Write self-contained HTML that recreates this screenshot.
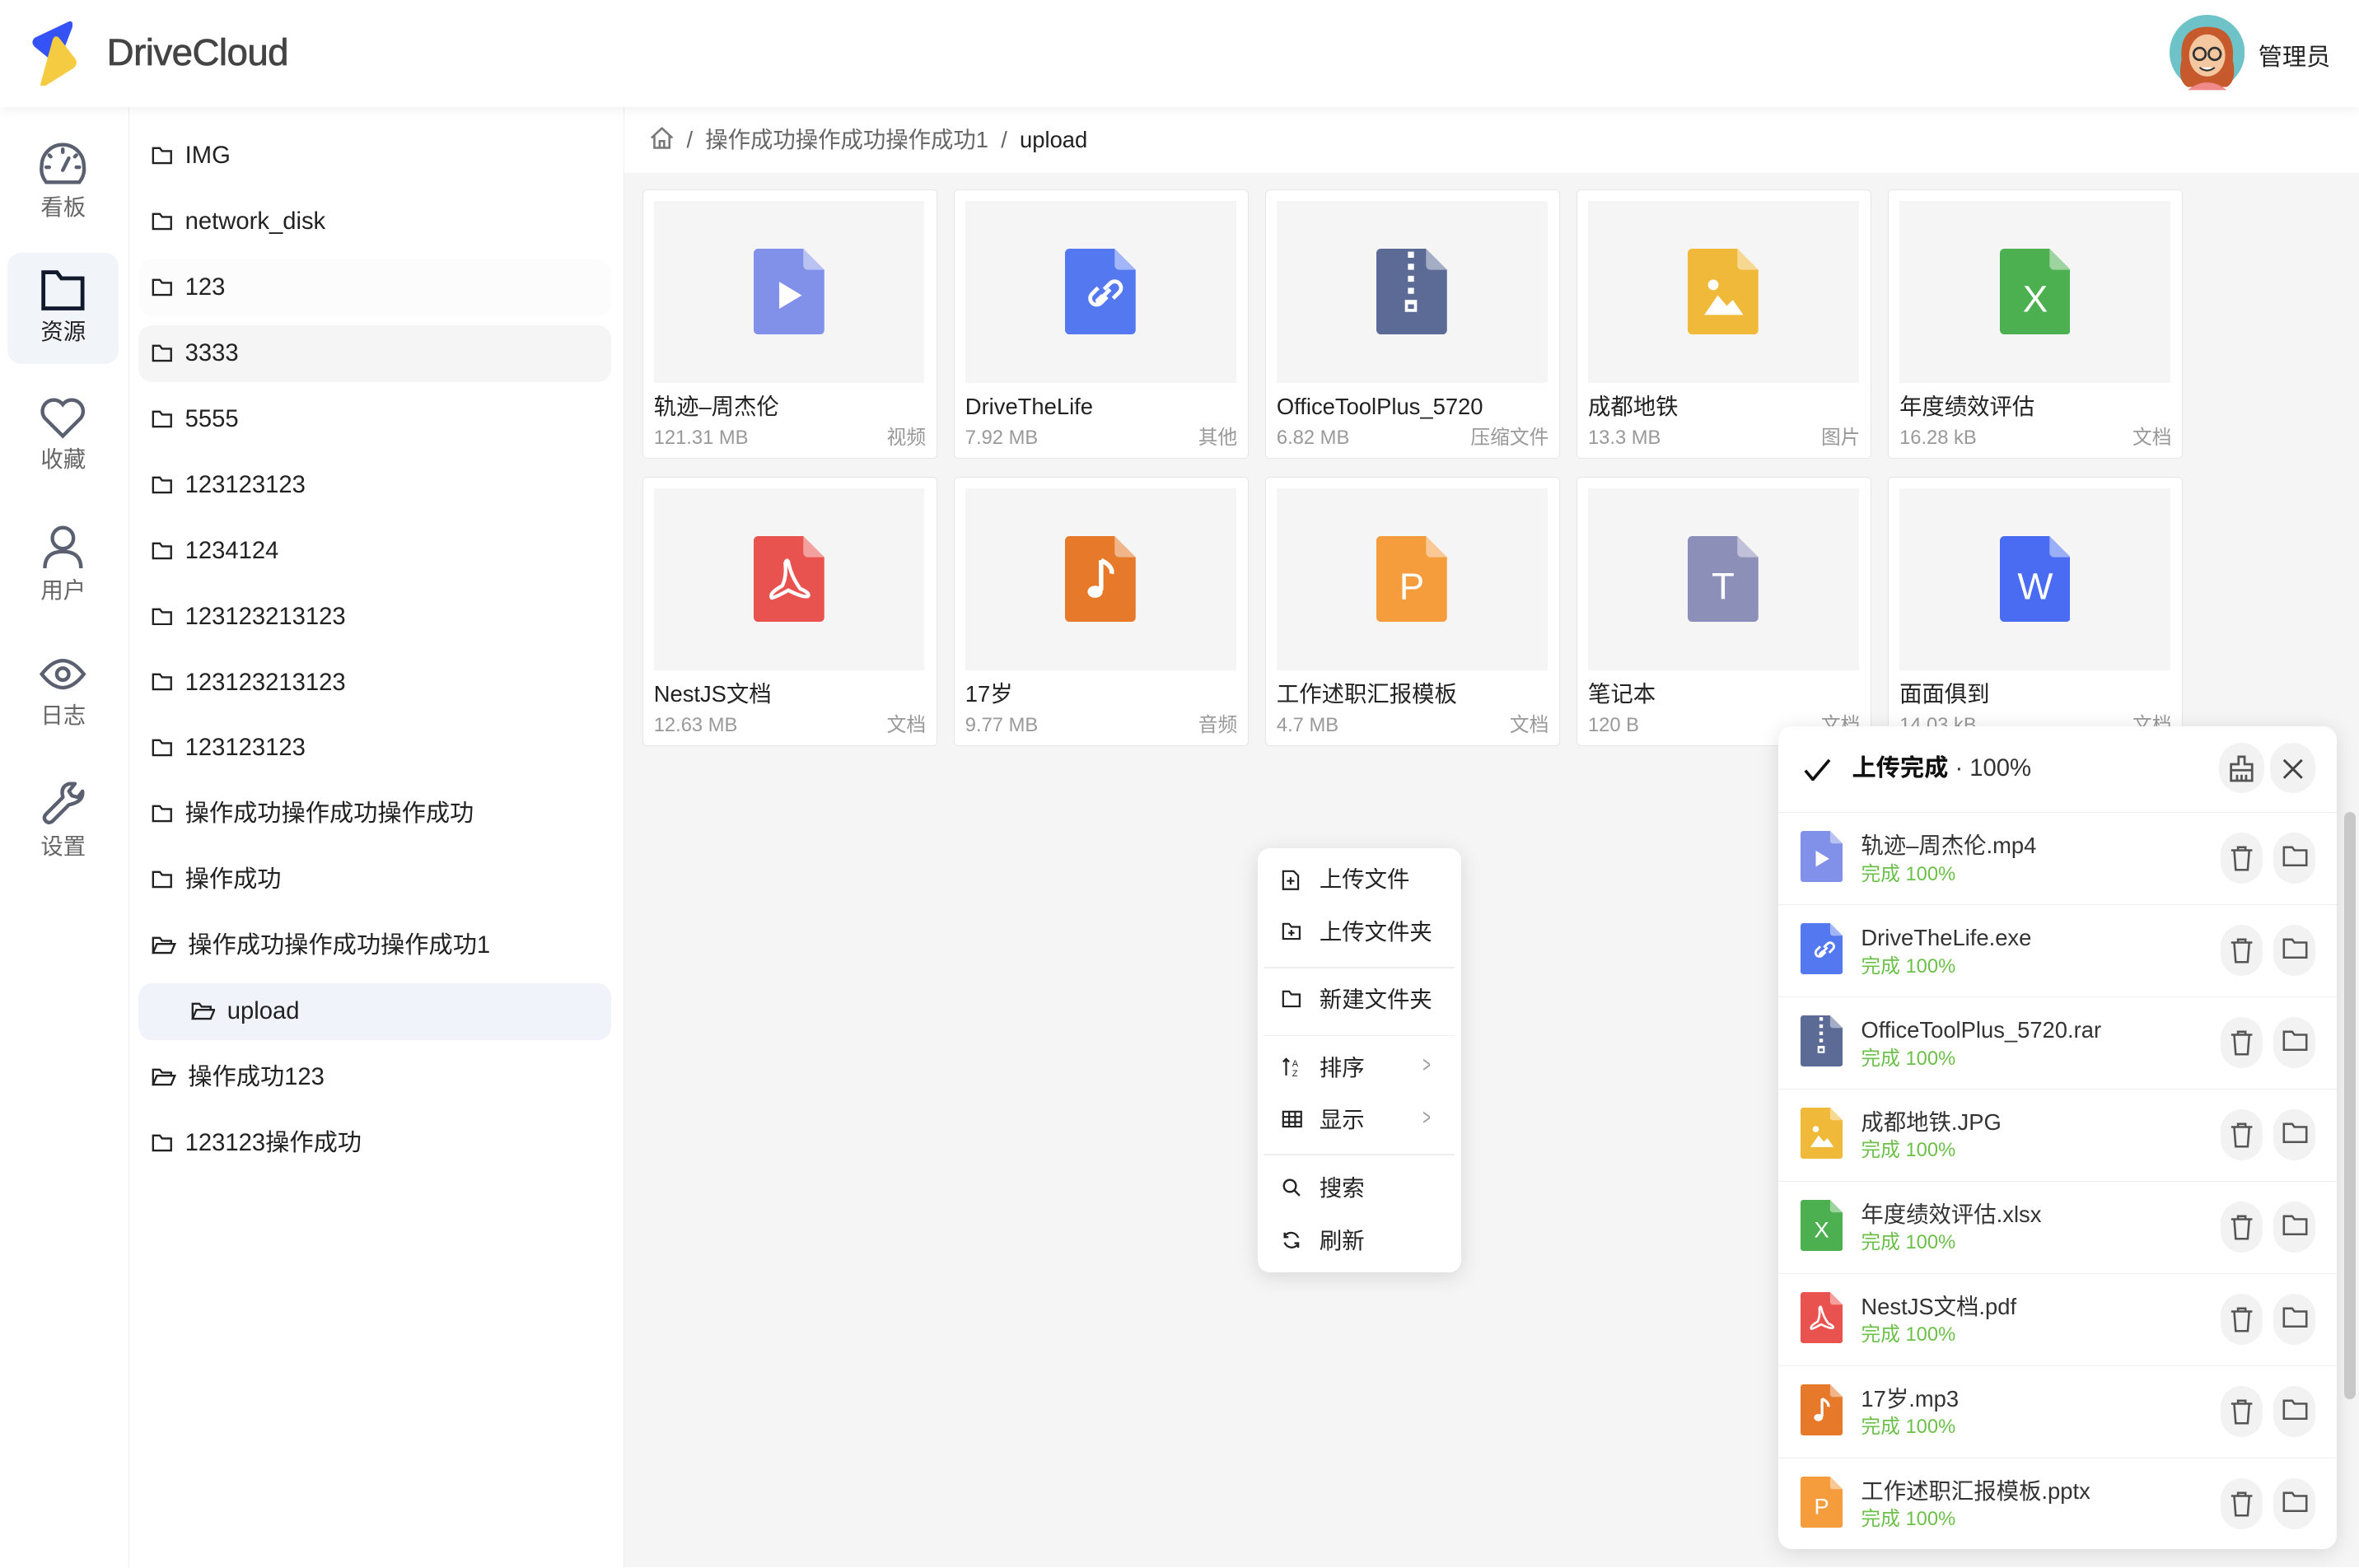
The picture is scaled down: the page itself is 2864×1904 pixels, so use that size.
<!DOCTYPE html>
<html><head><meta charset="utf-8">
<style>
*{box-sizing:border-box;margin:0;padding:0}
html,body{width:2864px;height:1904px;overflow:hidden;background:#fff}
body{font-family:"Liberation Sans","Noto Sans CJK SC",sans-serif;color:#222}
#root{zoom:1.82653;width:1568px;height:1042px;position:relative;overflow:hidden;background:#fff}
.a{position:absolute}
.hdr{left:0;top:0;width:1568px;height:71px;background:#fff;box-shadow:0 2px 8px rgba(0,0,0,.06);z-index:5}
.nav{left:0;top:71px;width:86px;height:971px;background:#fff;border-right:1px solid #eee}
.navi{position:absolute;left:5px;width:74px;height:74px;border-radius:9px;text-align:center;font-size:15px;line-height:18px;color:#666}
.navi svg{display:block;margin:11px auto 5px}
.tree{left:86px;top:71px;width:329px;height:971px;background:#fff;border-right:1px solid #eee}
.ti{position:absolute;left:6px;width:314px;height:38px;border-radius:9px;font-size:16px;line-height:38px;padding-left:9px;color:#222}
.ti svg{vertical-align:-1px;margin-right:8px}
.main{left:415px;top:115px;width:1153px;height:927px;background:#f5f5f5}
.crumb{left:415px;top:71px;width:1153px;height:44px;background:#fff;font-size:15px;line-height:44px;padding-left:17px;color:#666}
.card{position:absolute;width:196px;height:179px;background:#fff;border:1px solid #e6e6e6;border-radius:3px}
.card .pv{position:absolute;left:7px;top:7px;width:180px;height:121px;background:#f5f5f5;display:flex;align-items:center;justify-content:center}
.card .nm{position:absolute;left:7px;top:135px;font-size:15px;line-height:18px;height:18px;color:#222}
.card .sz{position:absolute;left:7px;top:157px;font-size:13px;line-height:16px;height:16px;color:#999}
.card .tp{position:absolute;right:7px;top:157px;font-size:13px;line-height:16px;height:16px;color:#999}
.menu{left:836px;top:564px;width:135px;height:282px;background:#fff;border-radius:8px;box-shadow:0 3px 14px rgba(0,0,0,.12);z-index:6}
.mi{position:absolute;left:16px;font-size:15px;color:#222;height:20px;line-height:20px}
.mi svg{position:absolute;left:0;top:3px}
.mi span{position:absolute;left:25px;white-space:nowrap}
.sep{position:absolute;left:4px;width:127px;height:1px;background:#eee}
.chev{position:absolute;left:108px;font-size:15px;color:#999;transform:scaleX(.6)}
.pan{left:1182px;top:483px;width:371px;height:547px;background:#fff;border-radius:9px;box-shadow:0 2px 14px rgba(0,0,0,.12);z-index:7;overflow:hidden}
.row{position:absolute;left:0;width:371px;height:61px;border-top:1px solid #eee}
.row .fn{position:absolute;left:55px;top:13px;font-size:15px;line-height:18px;color:#333;white-space:nowrap}
.row .st{position:absolute;left:55px;top:33px;font-size:13px;line-height:16px;color:#6cc04a}
.cb{position:absolute;width:28px;height:34px;border-radius:14px;background:#f2f2f2}
.cb svg{position:absolute;left:6px;top:9px}
</style></head><body><div id="root">
<svg width="0" height="0" style="position:absolute">
<defs>
<symbol id="doc" viewBox="0 0 47 57"><path d="M3 0H33L47 14V54a3 3 0 0 1-3 3H3a3 3 0 0 1-3-3V3a3 3 0 0 1 3-3Z"/><path d="M33 0L47 14H36a3 3 0 0 1-3-3Z" fill="#fff" opacity=".45"/></symbol>
</defs></svg>

<div class="a hdr">
<svg class="a" style="left:18px;top:13px" width="38" height="44" viewBox="0 0 38 44"><path d="M26 2 Q31 -1 30 5 L22 26 Q20 30 16 27 L5 18 Q2 15 5 12Z" fill="#3452f5"/><path d="M17 13 Q19 9 22 13 L32 26 Q34 29 31 32 L12 44 Q8 47 9 42Z" fill="#f5cb42"/></svg>
<div class="a" style="left:71px;top:21px;font-size:25px;color:#444;letter-spacing:-.3px;-webkit-text-stroke:.4px #444">DriveCloud</div>
<svg class="a" style="left:1442px;top:10px" width="50" height="50" viewBox="0 0 50 50"><circle cx="25" cy="25" r="25" fill="#6ec3c8"/><path d="M8 30 Q6 8 25 8 Q44 8 42 30 Q45 44 38 48 L12 48 Q5 44 8 30Z" fill="#c75a2c"/><ellipse cx="25" cy="27" rx="12" ry="14" fill="#f4c7a1"/><circle cx="20" cy="26" r="4" fill="none" stroke="#333" stroke-width="1.5"/><circle cx="30" cy="26" r="4" fill="none" stroke="#333" stroke-width="1.5"/><path d="M20 35 Q25 39 30 35" stroke="#333" fill="#fff" stroke-width="1.2"/><path d="M12 50 Q25 40 38 50Z" fill="#f08a8a"/></svg>
<div class="a" style="left:1501px;top:25px;font-size:16px;color:#222">管理员</div>
</div>

<div class="a nav">
<div class="navi" style="top:12px"><svg width="32" height="30" viewBox="0 0 32 30" fill="none" stroke="#5a6070" stroke-width="2.4" stroke-linecap="round"><path d="M5 27 Q1 22 2 16 A14 14 0 0 1 30 16 Q31 22 27 27Z"/><path d="M16 19 L20 11"/><path d="M16 5v2M7 9l1 1M25 9l-1 1M5 17h2M25 17h2"/></svg>看板</div>
<div class="navi" style="top:97px;background:#f1f4f9;color:#222"><svg width="30" height="28" viewBox="0 0 30 28" fill="none" stroke="#111a2c" stroke-width="2.6"><path d="M2 2H11L14 6H28V26H2Z"/></svg>资源</div>
<div class="navi" style="top:182px"><svg width="32" height="28" viewBox="0 0 32 28" fill="none" stroke="#5a6070" stroke-width="2.4"><path d="M16 26 L4 14 A7 7 0 0 1 16 5 A7 7 0 0 1 28 14Z"/></svg>收藏</div>
<div class="navi" style="top:267px"><svg width="30" height="30" viewBox="0 0 30 30" fill="none" stroke="#5a6070" stroke-width="2.4"><circle cx="15" cy="9" r="7"/><path d="M3 29 Q3 18 15 18 Q27 18 27 29"/></svg>用户</div>
<div class="navi" style="top:352px"><svg width="32" height="28" viewBox="0 0 32 28" fill="none" stroke="#5a6070" stroke-width="2.4"><path d="M2 14 Q16 -4 30 14 Q16 32 2 14Z"/><circle cx="16" cy="14" r="4"/></svg>日志</div>
<div class="navi" style="top:437px"><svg width="30" height="30" viewBox="0 0 30 30" fill="none" stroke="#5a6070" stroke-width="2.4" stroke-linejoin="round"><path d="M4 22 L15 11 Q13 4 19 2 L23 2 L19 7 L21 10 L25 11 L28 7 Q29 14 19 16 L8 27 Q5 29 3 26 Q2 24 4 22Z"/></svg>设置</div>
</div>

<div class="a tree"></div>

<div class="a crumb"><svg width="16" height="16" viewBox="0 0 16 16" fill="none" stroke="#777" stroke-width="1.4" style="vertical-align:-2px"><path d="M1 8 L8 1.5 L15 8 M3 6.5V14.5H13V6.5 M6.5 14.5V10H9.5V14.5"/></svg>&nbsp; /&nbsp; 操作成功操作成功操作成功1&nbsp; /&nbsp; <span style="color:#222">upload</span></div>

<div class="a main"></div>
<div id="cards"></div>

<div class="a menu">
<div class="mi" style="top:11px"><svg width="12" height="14" viewBox="0 0 12 14" fill="none" stroke="#222" stroke-width="1.2"><path d="M1 1H8L11 4V13H1Z M6 5V10 M3.5 7.5H8.5"/></svg><span>上传文件</span></div>
<div class="mi" style="top:46px"><svg width="13" height="12" viewBox="0 0 13 12" fill="none" stroke="#222" stroke-width="1.2"><path d="M1 1H5L6.5 3H12V11H1Z M6.5 5V9 M4.5 7H8.5"/></svg><span>上传文件夹</span></div>
<div class="sep" style="top:79px"></div>
<div class="mi" style="top:91px"><svg width="13" height="12" viewBox="0 0 13 12" fill="none" stroke="#222" stroke-width="1.2"><path d="M1 1H5L6.5 3H12V11H1Z"/></svg><span>新建文件夹</span></div>
<div class="sep" style="top:124px"></div>
<div class="mi" style="top:136px"><svg width="13" height="13" viewBox="0 0 13 13" fill="none" stroke="#222" stroke-width="1.2"><path d="M3 12V1 M1 3L3 1L5 3"/><text x="7" y="6" font-size="6" fill="#222" stroke="none" font-family="Liberation Sans">A</text><text x="7" y="12.5" font-size="6" fill="#222" stroke="none" font-family="Liberation Sans">Z</text></svg><span>排序</span></div>
<div class="chev" style="top:135px">&gt;</div>
<div class="mi" style="top:171px"><svg width="14" height="12" viewBox="0 0 14 12" fill="none" stroke="#222" stroke-width="1.2"><path d="M1 1H13V11H1Z M1 4.5H13 M1 8H13 M5 1V11 M9 1V11"/></svg><span>显示</span></div>
<div class="chev" style="top:170px">&gt;</div>
<div class="sep" style="top:203px"></div>
<div class="mi" style="top:216px"><svg width="13" height="13" viewBox="0 0 13 13" fill="none" stroke="#222" stroke-width="1.3"><circle cx="5.5" cy="5.5" r="4"/><path d="M8.5 8.5L12 12"/></svg><span>搜索</span></div>
<div class="mi" style="top:251px"><svg width="13" height="13" viewBox="0 0 13 13" fill="none" stroke="#222" stroke-width="1.3"><path d="M11 5A5 5 0 0 0 2 4 M2 8A5 5 0 0 0 11 9 M2 1.5V4.5H4.5 M11 11.5V8.5H8.5"/></svg><span>刷新</span></div>
</div>

<div class="a pan">
<svg class="a" style="left:17px;top:21px" width="18" height="15" viewBox="0 0 18 15" fill="none" stroke="#111" stroke-width="2"><path d="M1 8L6 14L17 1"/></svg>
<div class="a" style="left:49px;top:18px;font-size:16px;line-height:20px;color:#111"><b>上传完成</b> <span style="color:#333">· 100%</span></div>
<div class="cb" style="left:293px;top:11px;width:30px;height:33px;border-radius:15px"><svg width="18" height="18" viewBox="0 0 18 18" fill="none" stroke="#555" stroke-width="1.5" style="left:6px;top:8px"><path d="M7 1H11V6H16V10H2V6H7Z M2 10V17H16V10 M6 17V13 M9 17V13 M12 17V13"/></svg></div>
<div class="cb" style="left:327px;top:11px;width:30px;height:33px;border-radius:15px"><svg width="14" height="14" viewBox="0 0 14 14" fill="none" stroke="#444" stroke-width="1.6" style="left:8px;top:10px"><path d="M1 1L13 13M13 1L1 13"/></svg></div>
<div id="rows"></div>
</div>
<div class="a" style="left:1558px;top:540px;width:8px;height:390px;border-radius:4px;background:#c8c8c8;z-index:8"></div>

<script>
var F='<svg width="14" height="12" viewBox="0 0 14 12" fill="none" stroke="#222" stroke-width="1.3"><path d="M1 1H5.5L7 3H13V11H1Z"/></svg>';
var FO='<svg width="16" height="12" viewBox="0 0 16 12" fill="none" stroke="#222" stroke-width="1.3"><path d="M1 11V1H5.5L7 3H13V5 M1 11L3.5 5H15.5L13 11Z"/></svg>';
var tree=document.querySelector('.tree');
var items=[["IMG",0],["network_disk",0],["123",0,"#fcfcfc"],["3333",0,"#f5f5f5"],["5555"],["123123123"],["1234124"],["123123213123"],["123123213123"],["123123123"],["操作成功操作成功操作成功"],["操作成功"],["操作成功操作成功操作成功1",1],["upload",1,"#f0f3fa",1],["操作成功123",1],["123123操作成功"]];
var h='';items.forEach(function(t,i){h+='<div class="ti" style="top:'+(14+i*43.75)+'px;'+(t[2]?'background:'+t[2]+';':'')+(t[3]?'padding-left:35px;':'')+'">'+(t[1]?FO:F)+t[0]+'</div>';});
tree.innerHTML=h;
function glyph(k){
 switch(k){
 case'v':return '<path d="M17 22V40L32 31Z" fill="#fff"/>';
 case'l':return '<g fill="none" stroke="#fff" stroke-width="2.6"><path d="M22 26l-4 4a4 4 0 0 0 6 6l4-4"/><path d="M25 31l-4 4 M26 27l4-4a4 4 0 0 1 6 6l-4 4" /><path d="M21 36L30 27" /></g>';
 case'z':return '<path d="M21 2h4v4h-4zM21 10h4v4h-4zM21 18h4v4h-4zM21 26h4v4h-4z M19 34h8v8h-8z" fill="#fff"/><rect x="21" y="37" width="4" height="3" fill="#5c6a96"/>';
 case'i':return '<path d="M11 44L20 31L26 38L30 34L37 44Z" fill="#fff"/><circle cx="17" cy="24" r="3.5" fill="#fff"/>';
 case'p':return '<path d="M23 17Q25 27 31 35Q38 38 36 40Q33 41 23 36Q14 41 12 41Q10 38 19 33Q22 27 21 18Q22 15 23 17Z" fill="none" stroke="#fff" stroke-width="2.4"/>';
 case'm':return '<path d="M24 16V36" stroke="#fff" stroke-width="3"/><ellipse cx="20" cy="37" rx="5" ry="4" fill="#fff"/><path d="M24 16Q32 20 31 25" stroke="#fff" stroke-width="3" fill="none"/>';
 default:return '<text x="23.5" y="42" text-anchor="middle" font-size="25" fill="#fff" font-family="Liberation Sans">'+k+'</text>';
 }}
function ic(c,k,w){var hh=w*57/47;return '<svg width="'+w+'" height="'+hh+'" viewBox="0 0 47 57"><g fill="'+c+'"><use href="#doc"/></g>'+glyph(k)+'</svg>';}
var cards=[["轨迹–周杰伦","121.31 MB","视频","#8190e8","v"],["DriveTheLife","7.92 MB","其他","#5478f0","l"],["OfficeToolPlus_5720","6.82 MB","压缩文件","#5c6a96","z"],["成都地铁","13.3 MB","图片","#f0b93a","i"],["年度绩效评估","16.28 kB","文档","#4cb050","X"],["NestJS文档","12.63 MB","文档","#e9534f","p"],["17岁","9.77 MB","音频","#e6792a","m"],["工作述职汇报模板","4.7 MB","文档","#f59c3c","P"],["笔记本","120 B","文档","#8c8fb8","T"],["面面俱到","14.03 kB","文档","#4a6cf2","W"]];
var c='';cards.forEach(function(d,i){var x=427+(i%5)*207,y=126+Math.floor(i/5)*191;
c+='<div class="card" style="left:'+x+'px;top:'+y+'px"><div class="pv">'+ic(d[3],d[4],47)+'</div><div class="nm">'+d[0]+'</div><div class="sz">'+d[1]+'</div><div class="tp">'+d[2]+'</div></div>';});
document.getElementById('cards').innerHTML=c;
var rows=[["轨迹–周杰伦.mp4",0],["DriveTheLife.exe",1],["OfficeToolPlus_5720.rar",2],["成都地铁.JPG",3],["年度绩效评估.xlsx",4],["NestJS文档.pdf",5],["17岁.mp3",6],["工作述职汇报模板.pptx",7]];
var TR='<svg width="16" height="17" viewBox="0 0 16 17" fill="none" stroke="#555" stroke-width="1.4"><path d="M1 3H15 M5.5 3V1H10.5V3 M3 3L4 16H12L13 3"/></svg>';
var FD='<svg width="17" height="14" viewBox="0 0 17 14" fill="none" stroke="#555" stroke-width="1.4"><path d="M1 1H6.5L8 3H16V13H1Z"/></svg>';
var r='';rows.forEach(function(d,i){var k=cards[d[1]];
r+='<div class="row" style="top:'+(57+i*61.3)+'px"><div class="a" style="left:15px;top:12px">'+ic(k[3],k[4],28)+'</div><div class="fn">'+d[0]+'</div><div class="st">完成 100%</div><div class="cb" style="left:294px;top:13px">'+TR+'</div><div class="cb" style="left:329px;top:13px">'+FD+'</div></div>';});
document.getElementById('rows').innerHTML=r;
</script>
</div></body></html>
